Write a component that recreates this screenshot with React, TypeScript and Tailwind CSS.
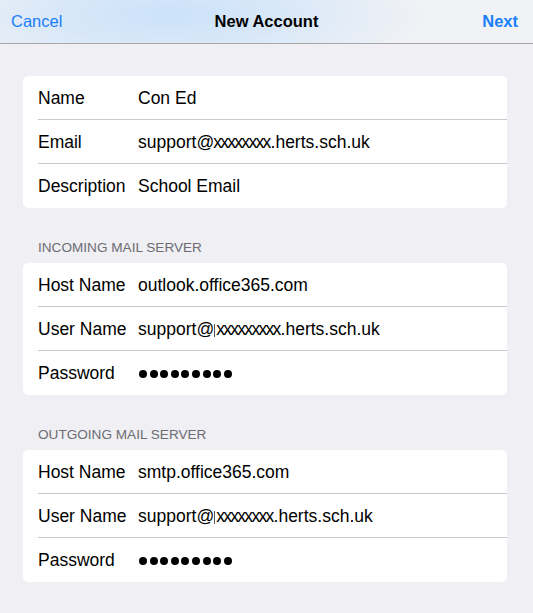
import React from "react";

const font = { fontFamily: '"Liberation Sans", Arial, sans-serif' };

function Dots() {
  return (
    <div className="flex items-center gap-[2.6px] pl-[1px]">
      {Array.from({ length: 9 }).map((_, i) => (
        <span key={i} className="block w-[8px] h-[8px] rounded-full bg-black" />
      ))}
    </div>
  );
}

function Masked({ n, bar }: { n: number; bar?: boolean }) {
  return (
    <span className="inline-flex items-baseline">
      <span>support</span>
      <span className="tracking-[-2px]">@</span>
      {bar ? <span className="inline-block w-px h-[13px] bg-[#555] ml-[2px] self-center mt-[2px]" /> : null}
      <span className="tracking-[-1.7px] ml-[1px]">{"x".repeat(n)}</span>
      <span className="ml-[1px]">.herts.sch.uk</span>
    </span>
  );
}

type Row = { label: string; value?: React.ReactNode; password?: boolean };

function Card({ rows }: { rows: Row[] }) {
  return (
    <div className="mx-[23px] w-[484px] bg-white rounded-[5px] overflow-hidden">
      {rows.map((r, i) => (
        <div key={i} className="pl-[15px]">
          <div
            className={
              "h-[44px] flex items-center pt-[1px] " +
              (i < rows.length - 1 ? "border-b border-[#c8c7cc]" : "")
            }
          >
            <div className="w-[100px] text-[17.5px] text-black whitespace-nowrap">{r.label}</div>
            {r.password ? (
              <Dots />
            ) : (
              <div className="text-[17.5px] text-black whitespace-nowrap">{r.value}</div>
            )}
          </div>
        </div>
      ))}
    </div>
  );
}

function Header({ text }: { text: string }) {
  return (
    <div className="pl-[38px] pt-[32px] pb-[7px] text-[13.6px] leading-[16px] text-[#6d6d72]">
      {text}
    </div>
  );
}

export default function App() {
  return (
    <div className="w-[533px] h-[613px] bg-[#efeff4] overflow-hidden" style={font}>
      <div className="h-[44px] border-b border-[#a7a7aa] bg-[radial-gradient(ellipse_260px_70px_at_170px_15px,#cbe2fa_0%,#d9e8f8_45%,#f1f2f5_100%)] flex items-center justify-between px-[11px] relative">
        <span className="text-[16.5px] text-[#1a7ffb]">Cancel</span>
        <span className="absolute left-0 right-0 text-center text-[16.5px] font-bold text-black pointer-events-none">
          New Account
        </span>
        <span className="text-[16.5px] font-bold text-[#1a7ffb] pr-[4px]">Next</span>
      </div>
      <div className="pt-[32px]">
        <Card
          rows={[
            { label: "Name", value: "Con Ed" },
            { label: "Email", value: <Masked n={8} /> },
            { label: "Description", value: "School Email" },
          ]}
        />
        <Header text="INCOMING MAIL SERVER" />
        <Card
          rows={[
            { label: "Host Name", value: "outlook.office365.com" },
            { label: "User Name", value: <Masked n={9} bar /> },
            { label: "Password", password: true },
          ]}
        />
        <Header text="OUTGOING MAIL SERVER" />
        <Card
          rows={[
            { label: "Host Name", value: "smtp.office365.com" },
            { label: "User Name", value: <Masked n={8} bar /> },
            { label: "Password", password: true },
          ]}
        />
      </div>
    </div>
  );
}
